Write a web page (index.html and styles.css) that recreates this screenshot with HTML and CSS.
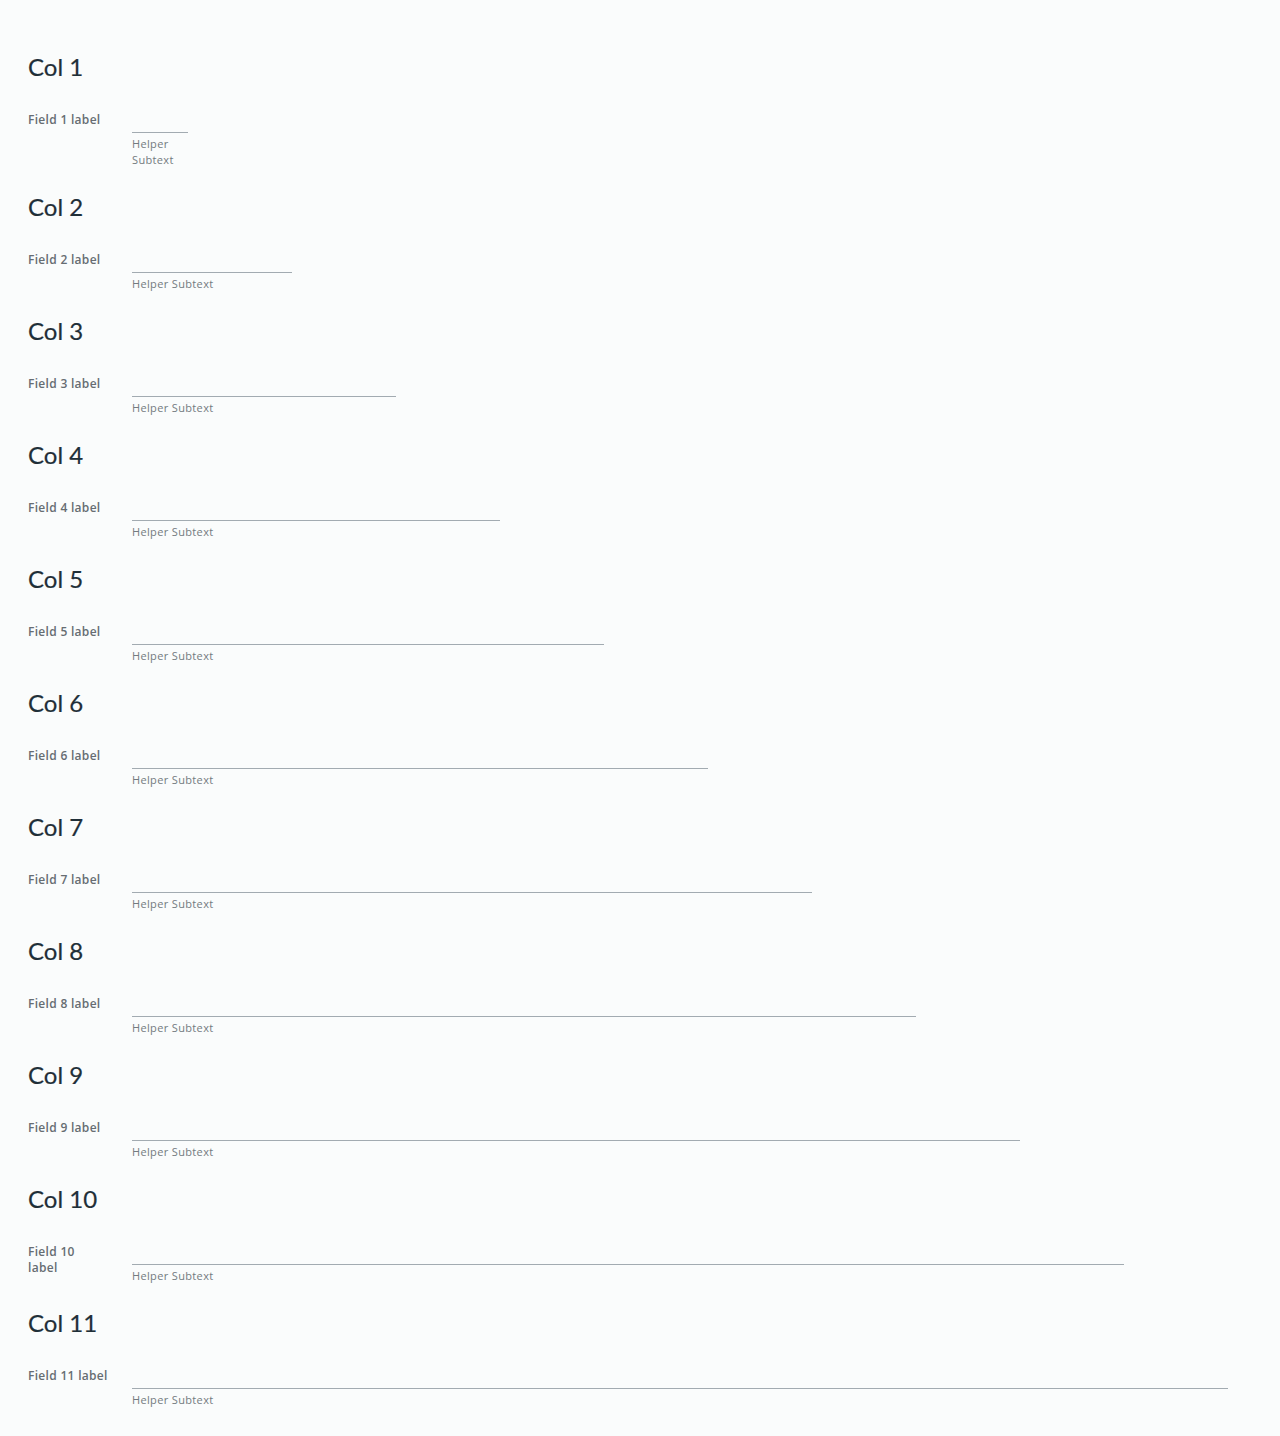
FILE: index.html
```html
<!DOCTYPE html>
<html lang="en">
<head>
<meta charset="utf-8">
<title>Columns form</title>
<link rel="stylesheet" href="styles.css">
</head>
<body>
<main class="page">
  <section class="section"><h3 class="heading">Col 1</h3><div class="form-row"><label class="label">Field 1 label</label><div class="control col-1"><div class="input"></div><div class="helper">Helper Subtext</div></div></div></section>
  <section class="section"><h3 class="heading">Col 2</h3><div class="form-row"><label class="label">Field 2 label</label><div class="control col-2"><div class="input"></div><div class="helper">Helper Subtext</div></div></div></section>
  <section class="section"><h3 class="heading">Col 3</h3><div class="form-row"><label class="label">Field 3 label</label><div class="control col-3"><div class="input"></div><div class="helper">Helper Subtext</div></div></div></section>
  <section class="section"><h3 class="heading">Col 4</h3><div class="form-row"><label class="label">Field 4 label</label><div class="control col-4"><div class="input"></div><div class="helper">Helper Subtext</div></div></div></section>
  <section class="section"><h3 class="heading">Col 5</h3><div class="form-row"><label class="label">Field 5 label</label><div class="control col-5"><div class="input"></div><div class="helper">Helper Subtext</div></div></div></section>
  <section class="section"><h3 class="heading">Col 6</h3><div class="form-row"><label class="label">Field 6 label</label><div class="control col-6"><div class="input"></div><div class="helper">Helper Subtext</div></div></div></section>
  <section class="section"><h3 class="heading">Col 7</h3><div class="form-row"><label class="label">Field 7 label</label><div class="control col-7"><div class="input"></div><div class="helper">Helper Subtext</div></div></div></section>
  <section class="section"><h3 class="heading">Col 8</h3><div class="form-row"><label class="label">Field 8 label</label><div class="control col-8"><div class="input"></div><div class="helper">Helper Subtext</div></div></div></section>
  <section class="section"><h3 class="heading">Col 9</h3><div class="form-row"><label class="label">Field 9 label</label><div class="control col-9"><div class="input"></div><div class="helper">Helper Subtext</div></div></div></section>
  <section class="section"><h3 class="heading">Col 10</h3><div class="form-row"><label class="label label-wrap">Field 10 label</label><div class="control col-10"><div class="input"></div><div class="helper">Helper Subtext</div></div></div></section>
  <section class="section"><h3 class="heading">Col 11</h3><div class="form-row"><label class="label">Field 11 label</label><div class="control col-11"><div class="input"></div><div class="helper">Helper Subtext</div></div></div></section>
</main>
</body>
</html>
```
FILE: styles.css
```css
html, body {
  margin: 0;
  padding: 0;
  background: #fafcfc;
}
body {
  font-family: Lato, "Liberation Sans", sans-serif;
  color: #565656;
}
.page {
  display: flex;
  flex-direction: column;
  gap: 24px;
  padding: 52px 28px 24px;
}
.section {
  display: flex;
  flex-direction: column;
  gap: 25px;
}
.heading {
  margin: 0;
  font-size: 24px;
  line-height: 30px;
  padding-bottom: 2px;
  font-weight: 400;
  color: #1f2f38;
  -webkit-text-stroke: 0.2px #1f2f38;
}
.form-row {
  display: flex;
  align-items: flex-start;
}
.label {
  box-sizing: border-box;
  width: 104px;
  flex: none;
  padding: 3px 20px 0 0;
  font-family: "Open Sans", Lato, sans-serif;
  font-size: 12px;
  line-height: 16px;
  font-weight: 600;
  letter-spacing: 0.3px;
  color: #666d72;
}
.label-wrap {
  padding-right: 40px;
}
.control {
  display: flex;
  flex-direction: column;
}
.input {
  box-sizing: border-box;
  height: 24px;
  border-bottom: 1px solid #a2abb1;
}
.helper {
  margin-top: 3px;
  font-family: "Open Sans", Lato, sans-serif;
  font-size: 11px;
  line-height: 16px;
  letter-spacing: 0.35px;
  color: #737b80;
}
.col-1 { width: 56px; }
.col-2 { width: 160px; }
.col-3 { width: 264px; }
.col-4 { width: 368px; }
.col-5 { width: 472px; }
.col-6 { width: 576px; }
.col-7 { width: 680px; }
.col-8 { width: 784px; }
.col-9 { width: 888px; }
.col-10 { width: 992px; }
.col-11 { width: 1096px; }
```
